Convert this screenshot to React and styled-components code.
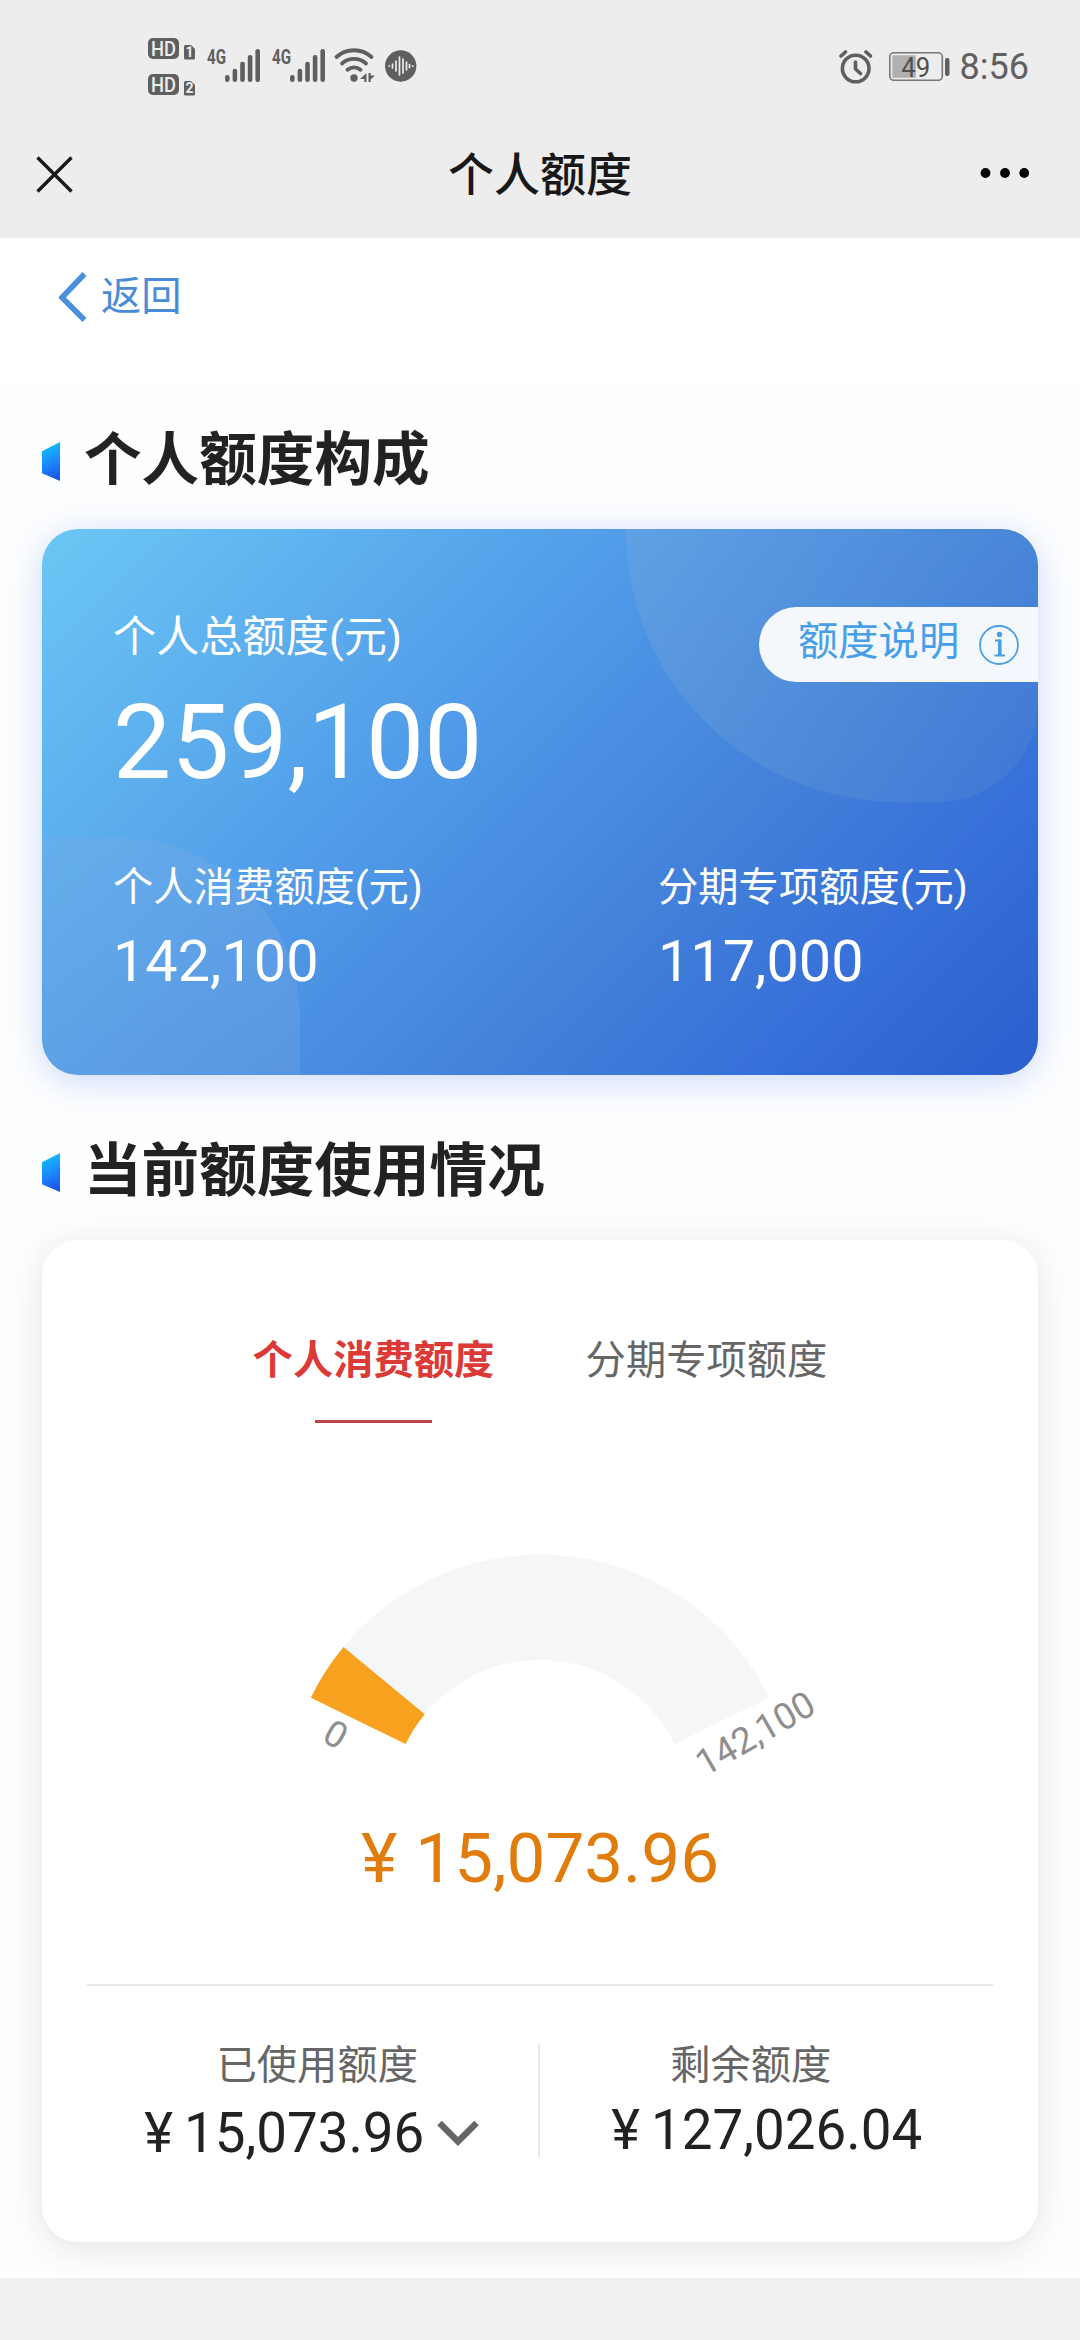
import React from 'react'
import styled, { createGlobalStyle } from 'styled-components'

const GlobalStyle = createGlobalStyle`
  * { box-sizing: border-box; }
  body {
    margin: 0;
    background: #f0f0f0;
    font-family: Roboto, 'Noto Sans CJK SC', sans-serif;
    color: #222;
  }
  svg { display: block; flex: none; }
`

const Screen = styled.div`
  width: 1080px;
  height: 2340px;
  overflow: hidden;
  background: #f0f0f0;
`

// top bars
const StatusBar = styled.div`
  height: 112px;
  padding: 22px 51px 0 148px;
  display: flex;
  align-items: center;
  justify-content: space-between;
  background: #ededed;
`
const StatusRight = styled.div`
  display: flex;
  align-items: center;
`
const Clock = styled.span`
  margin-left: 9px;
  font-size: 36px;
  line-height: 44px;
  color: #606060;
`
const NavBar = styled.div`
  height: 126px;
  padding: 0 50px 2px 36px;
  display: flex;
  align-items: center;
  justify-content: space-between;
  background: #ededed;
`
const NavTitle = styled.h1`
  margin: 0;
  padding: 2px 0 0 27px;
  font-size: 46px;
  font-weight: 500;
  line-height: 64px;
  color: #181818;
`

// page
const Page = styled.main`
  height: 2040px;
  padding: 0 42px;
  overflow: hidden;
  background: linear-gradient(#fff, #fdfefe 12%);
`
const Back = styled.a`
  height: 118px;
  padding-left: 17px;
  display: flex;
  align-items: center;
  gap: 13px;
  font-size: 40.3px;
  line-height: 60px;
  color: #4a8cd8;
`
const BackText = styled.span`
  padding-bottom: 1px;
`
const SectionTitle = styled.h2`
  margin: ${p => p.$top}px 0 26px;
  display: flex;
  align-items: center;
  gap: 24px;
  font-size: 57.6px;
  font-weight: 700;
  line-height: 84px;
  color: #222;
`
const Marker = styled.i`
  width: 18px;
  height: 39px;
  margin-top: 1px;
  background: linear-gradient(155deg, #12bcff 10%, #1a8cff 50%, #2048e6);
  clip-path: polygon(0 24%, 100% 0, 100% 100%, 0 80%);
`

// blue card
const LimitCard = styled.section`
  position: relative;
  height: 546px;
  padding: 78px 0 0 71px;
  border-radius: 36px;
  color: #fff;
  background: linear-gradient(135deg, #6bc7f4 0%, #509ae8 40%, #417ed9 67%, #3771d9 80%, #2a5fce 100%);
  box-shadow: 0 6px 36px rgba(60, 110, 240, 0.26);
`
const Blob = styled.div`
  position: absolute;
`
const TopBlob = styled(Blob)`
  top: 0;
  right: 0;
  width: 412px;
  height: 273px;
  border-radius: 0 36px 100px 272px;
  background: linear-gradient(90deg, rgba(150, 180, 210, 0.2), rgba(100, 155, 205, 0.18));
`
const BottomBlob = styled(Blob)`
  left: 0;
  bottom: 0;
  width: 258px;
  height: 237px;
  border-radius: 0 180px 0 36px;
  background: linear-gradient(90deg, rgba(130, 170, 220, 0.2), rgba(150, 180, 225, 0.2));
`
const CardHead = styled.div`
  position: relative;
  display: flex;
  align-items: flex-start;
  justify-content: space-between;
`
const TotalLabel = styled.div`
  font-size: 43.2px;
  line-height: 62px;
`
const Total = styled.div`
  margin-top: 19px;
  font-size: 103.5px;
  line-height: 110px;
`
const Pill = styled.button`
  width: 279px;
  height: 75px;
  padding: 0 19px 0 39px;
  display: flex;
  align-items: center;
  justify-content: space-between;
  border: 0;
  border-radius: 38px 0 0 38px;
  background: rgba(255, 255, 255, 0.94);
  font: inherit;
  font-size: 40.3px;
  color: #479fe8;
`
const PillText = styled.span`
  padding-bottom: 14px;
`
const Split = styled.div`
  position: relative;
  margin-top: 62px;
  display: grid;
  grid-template-columns: 545px 1fr;
`
const SplitLabel = styled.div`
  font-size: 40.3px;
  line-height: 56px;
`
const SplitValue = styled.div`
  margin-top: 11px;
  font-size: 57.6px;
  line-height: 70px;
`

// usage card
const UsageCard = styled.section`
  height: 1002px;
  padding: 91px 45px 0;
  border-radius: 36px;
  background: #fff;
  box-shadow: 0 6px 36px rgba(30, 50, 40, 0.12);
`
const Tabs = styled.div`
  height: 92px;
  display: flex;
  justify-content: center;
`
const Tab = styled.div`
  width: 333px;
  display: flex;
  flex-direction: column;
  align-items: center;
  justify-content: space-between;
  font-size: 40.3px;
  line-height: 60px;
  font-weight: ${p => (p.$active ? 700 : 400)};
  color: ${p => (p.$active ? '#dc3a37' : '#666')};
`
const Underline = styled.div`
  width: 117px;
  height: 3px;
  background: #bf434b;
`
const GaugeBox = styled.div`
  margin-top: 117px;
  display: flex;
  justify-content: center;
`
const Amount = styled.div`
  margin-top: 4px;
  text-align: center;
  font-size: 69.1px;
  line-height: 90px;
  color: #e07c0c;
`
const Stats = styled.div`
  margin-top: 80px;
  padding-top: 52px;
  border-top: 2px solid #e8e8e8;
  display: flex;
`
const Stat = styled.div`
  flex: 1;
  display: flex;
  flex-direction: column;
  align-items: center;
`
const StatLabel = styled.div`
  margin-left: ${p => p.$shift}px;
  font-size: 40.3px;
  line-height: 56px;
  color: #666;
`
const StatValue = styled.div`
  margin-top: ${p => p.$top}px;
  display: flex;
  align-items: center;
  font-size: 54.7px;
  line-height: 70px;
  color: #222;
`
const Yen = styled.span`
  margin-right: ${p => p.$gap}px;
`
const Arrow = styled.span`
  margin: 0 3px 0 13px;
`
const VRule = styled.div`
  width: 2px;
  height: 113px;
  margin: 6px 1px 0 -2px;
  background: #e8e8e8;
`

const GREY = '#5f5f5f'

const Hd = ({ y, n }) =>
<g transform={`translate(0 ${y})`}>
  <rect x="0" y="0" width="31" height="21" rx="5" fill={GREY}/>
  <text x="15.5" y="17.5" textAnchor="middle" textLength="25" lengthAdjust="spacingAndGlyphs" fontSize="20.5" fontWeight="500" fill="#ededed">HD</text>
  <path d="M37.5 7H43l4 4v9a1.5 1.5 0 0 1-1.5 1.5h-8A1.5 1.5 0 0 1 36 20V8.5A1.5 1.5 0 0 1 37.5 7z" fill={GREY}/>
  <text x="41.5" y="19.3" textAnchor="middle" fontSize="14" fontWeight="700" fill="#ededed">{n}</text>
</g>

const bars = [7, 13.3, 20.3, 27, 33]

const Signal = ({ x }) =>
<g transform={`translate(${x} 0)`}>
  <text x="0" y="27" textLength="19" lengthAdjust="spacingAndGlyphs" fontSize="21" fontWeight="700" fill={GREY}>4G</text>
  {bars.map((h, i) => <rect key={h} x={18 + i * 7.6} y={45 - h} width="4.6" height={h} rx="2.2" fill={GREY}/>)}
</g>

const StatusIcons = () =>
<svg width="270" height="60" viewBox="0 0 270 60">
  <Hd y={1} n="1"/>
  <Hd y={37} n="2"/>
  <Signal x={59}/>
  <Signal x={124}/>
  <g fill="none" stroke={GREY} strokeWidth="3.8" strokeLinecap="round">
    <path d="M188.5 20a26 26 0 0 1 35 0"/>
    <path d="M194 26.5a18 18 0 0 1 24 0"/>
    <path d="M199.5 32.8a10 10 0 0 1 13 0"/>
  </g>
  <circle cx="206" cy="41" r="3.7" fill={GREY}/>
  <path d="M218.5 36v9h-2.2v-3H212zM220.5 36v9h2.2v-2.5l4.3-4h-4.3V36z" fill={GREY}/>
  <circle cx="252.7" cy="29" r="15.7" fill={GREY}/>
  <g stroke="#ededed" strokeWidth="1.7" strokeLinecap="round">
    <path d="M241 29h.5M244.5 27v4M248 24v10M251.5 20v18M255 22v14M258.5 25v8M261.5 27.5v3M264.5 29h.5"/>
  </g>
</svg>

const Alarm = () =>
<svg width="34" height="36" viewBox="0 0 34 36">
  <g fill="none" stroke={GREY} strokeWidth="3.6" strokeLinecap="round" strokeLinejoin="round">
    <circle cx="16.7" cy="19.5" r="13.3"/>
    <path d="M16.5 13v7l5 4.5"/>
    <path d="M2 7l4.5-4M31.5 7L27 3"/>
  </g>
</svg>

const Battery = () =>
<svg width="78" height="30" viewBox="-16 0 78 30">
  <rect x=".8" y=".8" width="52.5" height="27.5" rx="4" fill="none" stroke="#777" strokeWidth="1.6"/>
  <rect x="3.3" y="3.3" width="23.5" height="22.5" fill="#b0b0b0"/>
  <text x="12.2" y="24.5" fontSize="27" textLength="29" lengthAdjust="spacingAndGlyphs" fill="#505050">49</text>
  <rect x="56" y="6" width="4.5" height="18" rx="2" fill={GREY}/>
</svg>

const Close = () =>
<svg width="37" height="37" viewBox="0 0 37 37">
  <path d="M1.5 1.5l34 34M35.5 1.5l-34 34" stroke="#181818" strokeWidth="3.4"/>
</svg>

const More = () =>
<svg width="50" height="12" viewBox="0 0 50 12">
  <circle cx="5.5" cy="5" r="4.9"/>
  <circle cx="25" cy="5" r="4.9"/>
  <circle cx="44.2" cy="5" r="4.9"/>
</svg>

const ChevronLeft = () =>
<svg width="29" height="50" viewBox="0 0 29 50">
  <path d="M25.5 2L3 25.5l22.5 22.5" fill="none" stroke="#4a90dc" strokeWidth="5.6"/>
</svg>

const ChevronDown = () =>
<svg width="42" height="27" viewBox="0 0 42 27">
  <path d="M2.5 3L21 21.5 39.5 3" fill="none" stroke="#666" strokeWidth="6.4"/>
</svg>

const Info = () =>
<svg width="40" height="40" viewBox="0 0 40 40">
  <circle cx="20" cy="20" r="19" fill="none" stroke="#479fe8" strokeWidth="1.8"/>
  <circle cx="20.5" cy="9.5" r="2.7" fill="#479fe8"/>
  <path d="M20.8 14.5V30" fill="none" stroke="#479fe8" strokeWidth="3.6"/>
  <path d="M16 15.5h5M15.5 30.5H26" fill="none" stroke="#479fe8" strokeWidth="2"/>
</svg>

// gauge sweeps from 154deg to 26deg around its centre
const CX = 300
const CY = 269.5
const point = (deg, r) => {
  const a = (deg * Math.PI) / 180
  return `${CX - r * Math.cos(a)} ${CY - r * Math.sin(a)}`
}
const ring = (from, to, outer = 255, inner = 149.5) =>
  `M${point(from, outer)}A${outer} ${outer} 0 0 1 ${point(to, outer)}` +
  `L${point(to, inner)}A${inner} ${inner} 0 0 0 ${point(from, inner)}Z`

const Gauge = ({ used, total }) => {
  const end = 26 + 128 * (used / total)
  return (
    <svg width="600" height="270" viewBox="0 0 600 270">
      <path d={ring(26, 154)} fill="#f4f6f8"/>
      <path d={ring(26, end)} fill="#f8a11f"/>
      <g fontSize="36.5" fill="#8e8e8e" textAnchor="middle">
        <text transform="translate(96 194) rotate(30)" y="13">0</text>
        <text transform="translate(515 193) rotate(-30)" y="13">142,100</text>
      </g>
    </svg>
  )
}

const App = () =>
<>
  <GlobalStyle/>
  <Screen>
    <StatusBar>
      <StatusIcons/>
      <StatusRight>
        <Alarm/>
        <Battery/>
        <Clock>8:56</Clock>
      </StatusRight>
    </StatusBar>
    <NavBar>
      <Close/>
      <NavTitle>个人额度</NavTitle>
      <More/>
    </NavBar>

    <Page>
      <Back>
        <ChevronLeft/>
        <BackText>返回</BackText>
      </Back>

      <SectionTitle $top={63}><Marker/>个人额度构成</SectionTitle>
      <LimitCard>
        <TopBlob/>
        <BottomBlob/>
        <CardHead>
          <div>
            <TotalLabel>个人总额度(元)</TotalLabel>
            <Total>259,100</Total>
          </div>
          <Pill><PillText>额度说明</PillText><Info/></Pill>
        </CardHead>
        <Split>
          <div>
            <SplitLabel>个人消费额度(元)</SplitLabel>
            <SplitValue>142,100</SplitValue>
          </div>
          <div>
            <SplitLabel>分期专项额度(元)</SplitLabel>
            <SplitValue>117,000</SplitValue>
          </div>
        </Split>
      </LimitCard>

      <SectionTitle $top={55}><Marker/>当前额度使用情况</SectionTitle>
      <UsageCard>
        <Tabs>
          <Tab $active>个人消费额度<Underline/></Tab>
          <Tab>分期专项额度</Tab>
        </Tabs>
        <GaugeBox>
          <Gauge used={15073.96} total={142100}/>
        </GaugeBox>
        <Amount><Yen $gap={18}>¥</Yen>15,073.96</Amount>
        <Stats>
          <Stat>
            <StatLabel $shift={8}>已使用额度</StatLabel>
            <StatValue $top={4}><Yen $gap={11}>¥</Yen>15,073.96<Arrow><ChevronDown/></Arrow></StatValue>
          </Stat>
          <VRule/>
          <Stat>
            <StatLabel $shift={-32}>剩余额度</StatLabel>
            <StatValue $top={1}><Yen $gap={11}>¥</Yen>127,026.04</StatValue>
          </Stat>
        </Stats>
      </UsageCard>
    </Page>
  </Screen>
</>

export default App
